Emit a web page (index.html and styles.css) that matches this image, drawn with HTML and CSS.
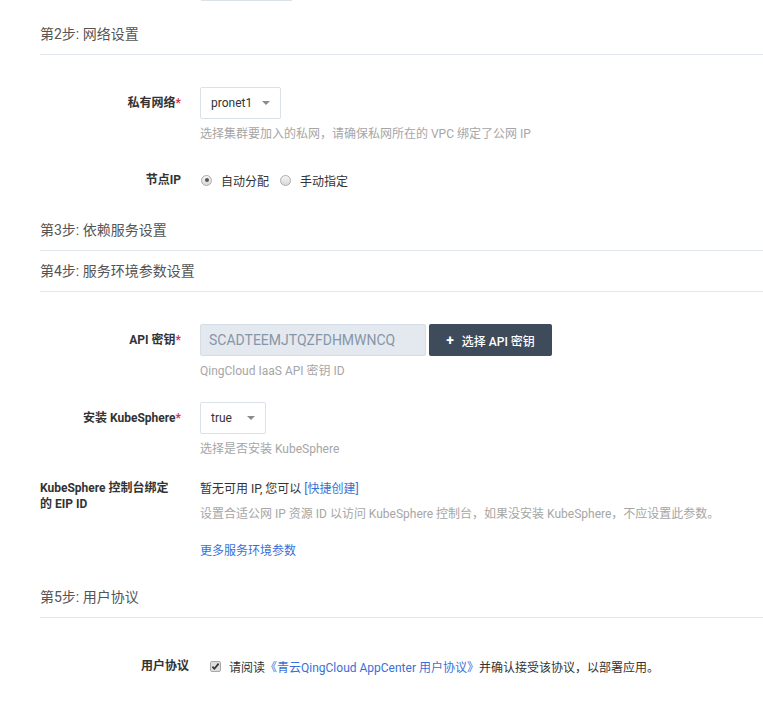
FILE: index.html
```html
<!DOCTYPE html>
<html lang="zh-CN">
<head>
<meta charset="utf-8">
<title>部署设置</title>
<link rel="stylesheet" href="styles.css">
</head>
<body>
<div class="page">
  <div class="top-stub"><div class="stub-box"></div></div>

  <div class="step step-two">第2步: 网络设置</div>
  <div class="step-body">
    <div class="row row-net">
      <div class="label">私有网络<span class="req">*</span></div>
      <div class="field">
        <div class="select select-net"><span>pronet1</span><i class="caret"></i></div>
        <div class="help">选择集群要加入的私网，请确保私网所在的 VPC 绑定了公网 IP</div>
      </div>
    </div>
    <div class="row row-last">
      <div class="label">节点IP</div>
      <div class="field">
        <div class="radios">
          <span class="radio checked"></span><span class="radio-text">自动分配</span>
          <span class="radio"></span><span class="radio-text">手动指定</span>
        </div>
      </div>
    </div>
  </div>

  <div class="step step-three">第3步: 依赖服务设置</div>
  <div class="step step-flat">第4步: 服务环境参数设置</div>
  <div class="step-body">
    <div class="row">
      <div class="label">API 密钥<span class="req">*</span></div>
      <div class="field">
        <div class="inline">
          <div class="input">SCADTEEMJTQZFDHMWNCQ</div>
          <button class="btn"><span class="plus">+</span>选择 API 密钥</button>
        </div>
        <div class="help">QingCloud IaaS API 密钥 ID</div>
      </div>
    </div>
    <div class="row">
      <div class="label">安装 KubeSphere<span class="req">*</span></div>
      <div class="field">
        <div class="select select-bool"><span>true</span><i class="caret"></i></div>
        <div class="help">选择是否安装 KubeSphere</div>
      </div>
    </div>
    <div class="row row-eip">
      <div class="label label-left">KubeSphere 控制台绑定的 EIP ID</div>
      <div class="field">
        <div class="value">暂无可用 IP, 您可以 <a class="link" href="#">[快捷创建]</a></div>
        <div class="help help-eip">设置合适公网 IP 资源 ID 以访问 KubeSphere 控制台，如果没安装 KubeSphere，不应设置此参数。</div>
        <a class="link more" href="#">更多服务环境参数</a>
      </div>
    </div>
  </div>

  <div class="step step-five">第5步: 用户协议</div>
  <div class="step-body">
    <div class="row row-agree">
      <div class="label label-agree">用户协议</div>
      <div class="field">
        <div class="agree">
          <svg class="check" width="11" height="11" viewBox="0 0 11 11"><rect x="0.5" y="0.5" width="10" height="10" rx="1.5" fill="#dedede" stroke="#a9a9a9"/><path d="M2.4 5.6 L4.4 7.8 L8.6 2.6" fill="none" stroke="#333" stroke-width="1.7"/></svg>
          <span>请阅读</span><a class="link" href="#">《青云QingCloud AppCenter 用户协议》</a><span>并确认接受该协议，以部署应用。</span>
        </div>
      </div>
    </div>
  </div>
</div>
</body>
</html>
```
FILE: styles.css
```css
* { box-sizing: border-box; }
html, body { margin: 0; padding: 0; background: #fff; }
body {
  font-family: Roboto, "Noto Sans CJK SC", sans-serif;
  font-size: 12px;
  color: #333;
}
.page { padding-left: 40px; width: 763px; }

.top-stub { display: flex; height: 1px; padding-left: 160px; }
.stub-box {
  flex: none;
  width: 93px; height: 32px; margin-top: -31px;
  border: 1px solid #dbe1e8; border-radius: 2px; background: #fff;
}

.step {
  margin-top: 12px;
  padding: 10px 0;
  line-height: 20px;
  font-size: 14px;
  color: #555;
  border-bottom: 1px solid #e3e8ee;
}
.step-two { margin-top: 13px; }
.step-three { margin-top: 14px; }
.step-flat { margin-top: 0; }
.step-five { margin-top: 17px; }

.step-body { padding-top: 32px; }

.row { display: flex; align-items: flex-start; margin-bottom: 22px; }
.row-net { margin-bottom: 21px; }
.row-last { margin-bottom: 0; }
.label {
  width: 141px; margin-right: 19px;
  text-align: right; font-weight: 700; line-height: 32px; color: #333;
  flex: none;
}
.req { color: #d0324b; }
.label-left { text-align: left; line-height: 16px; padding-right: 8px; }
.field { flex: 1; min-width: 0; }

.select {
  display: flex; align-items: center; justify-content: space-between;
  height: 32px; padding: 0 10px;
  border: 1px solid #dbe1e8; border-radius: 2px;
  color: #333; font-size: 12px;
}
.select-net { width: 81px; }
.select-bool { width: 66px; }
.caret {
  width: 0; height: 0;
  border-left: 4px solid transparent; border-right: 4px solid transparent;
  border-top: 4px solid #8c8c8c;
}

.help { margin-top: 6px; line-height: 18px; color: #a6a6a6; font-size: 12px; }

.radios { display: flex; align-items: center; height: 32px; }
.radio {
  width: 11px; height: 11px; border-radius: 50%;
  border: 1px solid #ababab;
  background: linear-gradient(#f6f6f6, #d8d8d8);
  margin-left: 1px; margin-right: 9px;
  position: relative;
}
.radio.checked::after {
  content: ""; position: absolute; left: 2.5px; top: 2.5px;
  width: 4px; height: 4px; border-radius: 50%; background: #555;
}
.radio-text { margin-right: 10px; color: #333; }

.inline { display: flex; align-items: center; }
.input {
  width: 226px; height: 32px; padding: 0 8px;
  background: #e4e9f0; border: 1px solid #d5dde6; border-radius: 2px;
  font-size: 14px; line-height: 30px; color: #8796a7;
}
.btn {
  margin-left: 3px; width: 123px; height: 32px;
  background: #3d4b5b; color: #fff; border: 0; border-radius: 2px;
  font-family: Roboto, "Noto Sans CJK SC", sans-serif;
  font-size: 12px; font-weight: 500;
  display: flex; align-items: center; justify-content: center;
}
.plus { font-size: 14px; font-weight: 700; margin-right: 8px; }

.row-eip { margin-bottom: 0; }
.value { line-height: 18px; color: #333; }
.link { color: #3a6fd8; text-decoration: none; }
.help-eip { margin-top: 7px; }
.more { display: block; margin-top: 19px; line-height: 18px; }

.row-agree { align-items: center; margin-bottom: 0; }
.label-agree { width: 149px; margin-right: 21px; }
.agree { display: flex; align-items: center; color: #333; }
.check { margin-right: 8px; flex: none; }
```
